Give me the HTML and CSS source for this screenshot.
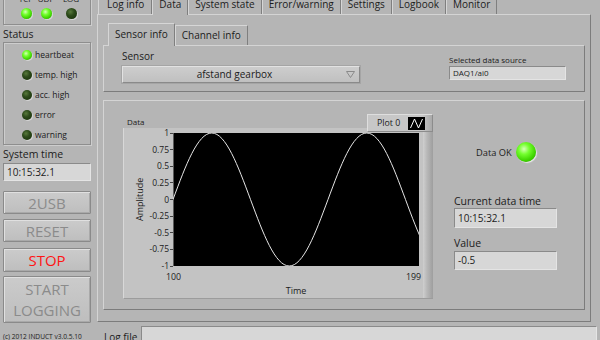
FILE: index.html
```html
<!DOCTYPE html>
<html>
<head>
<meta charset="utf-8">
<title>INDUCT</title>
<link rel="stylesheet" href="styles.css">
</head>
<body>
<div class="left">
  <div class="comm box">
    <div class="comm-grid">
      <span>TCP</span><span>UDP</span><span>LOG</span>
      <i class="led md on"></i><i class="led md on"></i><i class="led md off"></i>
    </div>
  </div>
  <div class="lbl status-lbl">Status</div>
  <div class="status-box box">
    <div class="srow"><i class="led sm on"></i><span>heartbeat</span></div>
    <div class="srow"><i class="led sm off"></i><span>temp. high</span></div>
    <div class="srow"><i class="led sm off"></i><span>acc. high</span></div>
    <div class="srow"><i class="led sm off"></i><span>error</span></div>
    <div class="srow"><i class="led sm off"></i><span>warning</span></div>
  </div>
  <div class="lbl systime-lbl">System time</div>
  <div class="field systime">10:15:32.1</div>
  <button class="btn dis b-usb">2USB</button>
  <button class="btn dis b-reset">RESET</button>
  <button class="btn stop">STOP</button>
  <button class="btn dis big">START<br>LOGGING</button>
  <div class="copy">(c) 2012 INDUCT  v3.0.5.10</div>
</div>

<div class="right">
  <div class="tabs">
    <div class="tab first">Log info</div>
    <div class="tab sel">Data</div>
    <div class="tab">System state</div>
    <div class="tab">Error/warning</div>
    <div class="tab">Settings</div>
    <div class="tab">Logbook</div>
    <div class="tab">Monitor</div>
  </div>
  <div class="panel">
    <div class="subtabs">
      <div class="stab sel">Sensor info</div>
      <div class="stab">Channel info</div>
    </div>
    <div class="subpanel">
      <div class="sensor">
        <div class="lbl sensor-lbl">Sensor</div>
        <div class="ring"><span>afstand gearbox</span>
          <svg class="arrow" width="9" height="7" viewBox="0 0 9 7"><polygon points="0.5,0.5 8.5,0.5 4.5,6.5" fill="none" stroke="#8a8a8a" stroke-width="1"/></svg>
        </div>
      </div>
      <div class="source">
        <div class="tiny">Selected data source</div>
        <div class="field srcfield">DAQ1/ai0</div>
      </div>
    </div>
    <div class="group">
      <div class="graph">
        <div class="ghead">
          <span class="gname">Data</span>
          <div class="legend"><span>Plot 0</span>
            <svg class="licon" width="17" height="13" viewBox="0 0 17 13"><rect width="17" height="13" fill="#000"/><path d="M2.5,11 L6.5,2 L10.5,11 L14.5,2" fill="none" stroke="#fff" stroke-width="1"/></svg>
          </div>
        </div>
        <div class="gframe">
          <div class="yaxis">
            <div class="ytitle">Amplitude</div>
            <div class="yticks">
              <span>1</span><span>0.75</span><span>0.5</span><span>0.25</span><span>0</span><span>-0.25</span><span>-0.5</span><span>-0.75</span><span>-1</span>
            </div>
          </div>
          <div class="plotcol">
            <div class="plot">
              <svg width="246" height="133" viewBox="0 0 246 133">
                <path d="M0,66.5 c12.64,-34.07 24.73,-66.5 38.75,-66.5 s26.11,32.43 38.75,66.5 s24.73,66.5 38.75,66.5 s26.11,-32.43 38.75,-66.5 s24.73,-66.5 38.75,-66.5 s26.11,32.43 38.75,66.5 s24.73,66.5 38.75,66.5" fill="none" stroke="#e6e6e6" stroke-width="1"/>
              </svg>
            </div>
            <div class="xlabels"><span>100</span><span>199</span></div>
            <div class="xtitle">Time</div>
          </div>
          <div class="strip"></div>
        </div>
      </div>
      <div class="side">
        <div class="okrow"><span>Data OK</span><i class="led lg on"></i></div>
        <div class="lbl cdt-lbl">Current data time</div>
        <div class="field cdt">10:15:32.1</div>
        <div class="lbl val-lbl">Value</div>
        <div class="field val">-0.5</div>
      </div>
    </div>
  </div>
  <div class="logrow">
    <span class="lbl">Log file</span>
    <div class="field logfield"></div>
  </div>
</div>
</body>
</html>
```

FILE: styles.css
```css
* { box-sizing: border-box; }

body {
  margin: 0;
  width: 600px;
  height: 340px;
  overflow: hidden;
  background: #b5b5b5;
  display: flex;
  font-family: "Open Sans", "Noto Sans", sans-serif;
  color: #1c1c1c;
}

.box {
  border: 1px solid #8e8e8e;
  box-shadow: inset 1px 1px 0 #cdcdcd, 1px 1px 0 #cdcdcd;
}

.lbl {
  font-size: 10.5px;
  line-height: 12px;
  white-space: nowrap;
}

/* LEDs */
.led { display: block; border-radius: 50%; flex: none; }
.led.md { width: 11px; height: 11px; }
.led.sm { width: 10px; height: 10px; }
.led.lg { width: 20px; height: 20px; box-shadow: 1px 1px 1px #ececec; }
.led.on {
  background: radial-gradient(circle at 40% 35%, #d6ffb8 0%, #74ff2e 30%, #3fd400 65%, #249600 100%);
}
.led.off {
  background: radial-gradient(circle at 40% 35%, #587a3c 0%, #2c4a1a 40%, #152e08 100%);
}
.led.md, .led.sm { box-shadow: 1px 1px 0 #d6d6d6; }

/* Left column */
.left {
  width: 97px;
  flex: none;
  display: flex;
  flex-direction: column;
  padding-left: 3px;
}

.comm {
  width: 88px;
  height: 37px;
  margin-top: -12px;
  flex: none;
}

.comm-grid {
  display: grid;
  grid-template-columns: 20px 20px 30px;
  grid-template-rows: 10px 11px;
  row-gap: 4px;
  padding: 5px 0 0 12px;
  justify-items: center;
}

.comm-grid span {
  font-size: 8px;
  line-height: 10px;
}

.status-lbl { margin-top: 3px; }

.status-box {
  width: 88px;
  height: 103px;
  margin-top: 2px;
  padding: 2px 0 0 18px;
  flex: none;
}

.srow {
  height: 20px;
  display: flex;
  align-items: center;
}

.srow span {
  margin-left: 3px;
  font-size: 8.5px;
  line-height: 10px;
}

.systime-lbl { margin-top: 3px; }

.field {
  background: #d7d7d7;
  border: 1px solid;
  border-color: #8a8a8a #e4e4e4 #e4e4e4 #8a8a8a;
  font-size: 10px;
  padding-left: 3px;
  white-space: nowrap;
  overflow: hidden;
}

.systime {
  width: 88px;
  height: 18px;
  margin-top: 3px;
  line-height: 16px;
  flex: none;
}

.btn {
  width: 88px;
  height: 23px;
  flex: none;
  padding: 0;
  font-family: "Open Sans", "Noto Sans", sans-serif;
  font-size: 15px;
  line-height: 20px;
  background: linear-gradient(#cbcbcb, #bebebe);
  border: 1px solid #8a8a8a;
  box-shadow: inset 1px 1px 0 #e0e0e0, inset -1px -1px 0 #a9a9a9;
  border-radius: 1px;
}

.btn.dis { color: #8b8b8b; }
.b-usb { margin-top: 10px; }
.b-reset { margin-top: 5px; }
.btn.stop { margin-top: 6px; height: 24px; color: #ff1414; }
.btn.big { margin-top: 4px; height: 47px; line-height: 21px; }

.copy {
  margin-top: 9px;
  font-size: 6.6px;
  line-height: 10px;
  white-space: nowrap;
}

/* Right column */
.right {
  flex: 1;
  display: flex;
  flex-direction: column;
  min-width: 0;
}

.tabs {
  display: flex;
  height: 20px;
  margin-top: -6px;
  padding-left: 1px;
  position: relative;
  z-index: 1;
}

.tab {
  height: 20px;
  padding: 0 6px;
  font-size: 10px;
  line-height: 19px;
  border: 1px solid;
  border-color: #d6d6d6 #7f7f7f transparent #d6d6d6;
  border-bottom: none;
  white-space: nowrap;
}

.tab.first { padding: 0 7px 0 8px; }

.tab.sel {
  height: 21px;
  background: #b5b5b5;
}

.panel {
  width: 494px;
  height: 308px;
  border: 1px solid;
  border-color: #d4d4d4 #7c7c7c #7c7c7c #d4d4d4;
  padding: 8px 5px 0 5px;
  flex: none;
}

.subtabs {
  display: flex;
  align-items: flex-end;
  height: 22px;
  padding-left: 5px;
  position: relative;
  z-index: 1;
}

.stab {
  height: 20px;
  padding: 0 6px;
  font-size: 10px;
  line-height: 19px;
  border: 1px solid;
  border-color: #d6d6d6 #7f7f7f transparent #d6d6d6;
  border-bottom: none;
  white-space: nowrap;
}

.stab.sel {
  height: 23px;
  margin-bottom: -1px;
  line-height: 20px;
  background: #b5b5b5;
}

.subpanel {
  height: 47px;
  display: flex;
  border: 1px solid;
  border-color: #d4d4d4 #7c7c7c #7c7c7c #d4d4d4;
  padding: 5px 0 0 18px;
}

.sensor-lbl {
  font-size: 10px;
  line-height: 10px;
}

.ring {
  width: 238px;
  height: 17px;
  margin-top: 5px;
  display: flex;
  align-items: center;
  background: linear-gradient(#cdcdcd, #c0c0c0);
  border: 1px solid;
  border-color: #e2e2e2 #8a8a8a #8a8a8a #e2e2e2;
  box-shadow: 0 0 0 1px #a5a5a5;
  font-size: 10px;
  padding: 0 4px 0 0;
}

.ring span {
  flex: 1;
  text-align: center;
  line-height: 15px;
}

.source {
  margin-left: 89px;
  padding-top: 4px;
}

.tiny {
  font-size: 8px;
  line-height: 10px;
  white-space: nowrap;
}

.srcfield {
  width: 117px;
  height: 14px;
  margin-top: 1px;
  font-size: 8px;
  line-height: 12px;
}

/* Graph group */
.group {
  height: 210px;
  margin-top: 8px;
  display: flex;
  border: 1px solid;
  border-color: #d4d4d4 #7c7c7c #7c7c7c #d4d4d4;
  padding-left: 19px;
}

.graph {
  width: 310px;
  display: flex;
  flex-direction: column;
  padding-top: 13px;
}

.ghead {
  height: 18px;
  display: flex;
  position: relative;
  z-index: 1;
}

.gname {
  font-size: 8px;
  line-height: 10px;
  margin: 3px 0 0 4px;
}

.legend {
  margin-left: auto;
  width: 66px;
  height: 18px;
  display: flex;
  align-items: center;
  background: linear-gradient(90deg, #c7c7c7 85%, #a9a9a9 100%);
  border: 1px solid;
  border-color: #dedede #8c8c8c #8c8c8c #dedede;
  padding-left: 9px;
  font-size: 8.8px;
}

.licon { margin-left: auto; margin-right: 7px; }

.gframe {
  height: 171px;
  margin-top: -4px;
  display: flex;
  background: #c3c3c3;
  border-left: 1px solid #d8d8d8;
  border-bottom: 1px solid #9c9c9c;
}

.yaxis {
  width: 49px;
  display: flex;
  padding-left: 9px;
}

.ytitle {
  width: 14px;
  height: 143px;
  writing-mode: vertical-rl;
  transform: rotate(180deg);
  text-align: center;
  font-size: 9px;
  line-height: 14px;
}

.yticks {
  width: 26px;
  height: 143px;
  display: flex;
  flex-direction: column;
  justify-content: space-between;
  align-items: flex-end;
}

.yticks span {
  font-size: 8.5px;
  line-height: 10px;
  display: flex;
  align-items: center;
}

.yticks span::after {
  content: "";
  width: 3px;
  height: 1px;
  margin-left: 1px;
  background: #444;
}

.plotcol {
  width: 246px;
  padding-top: 5px;
}

.plot {
  width: 246px;
  height: 133px;
  background: #000;
  border-left: 1px solid #5a5a5a;
}

.plot svg { display: block; margin-left: -1px; }

.xlabels {
  display: flex;
  justify-content: space-between;
  margin: 6px -2px 0 -7px;
  font-size: 8.8px;
  line-height: 10px;
}

.xtitle {
  margin-top: 4px;
  text-align: center;
  font-size: 9px;
  line-height: 10px;
}

.strip {
  width: 10px;
  margin-left: 4px;
  background: linear-gradient(90deg, #cfcfcf, #b8b8b8 40%, #9e9e9e);
}

.side {
  width: 103px;
  margin-left: 21px;
  padding-top: 41px;
}

.okrow {
  display: flex;
  align-items: center;
  padding-left: 22px;
  font-size: 9.3px;
}

.okrow span { margin-right: 4px; }

.cdt-lbl { margin-top: 33px; }

.cdt {
  height: 20px;
  margin-top: 1px;
  line-height: 18px;
}

.val-lbl { margin-top: 9px; }

.val {
  height: 19px;
  margin-top: 2px;
  line-height: 17px;
}

.logrow {
  display: flex;
  margin-top: 4px;
  padding-left: 7px;
}

.logrow .lbl {
  font-size: 10px;
  margin-top: 5px;
}

.logfield {
  flex: 1;
  height: 20px;
  margin-left: 4px;
  margin-right: 3px;
}
```
